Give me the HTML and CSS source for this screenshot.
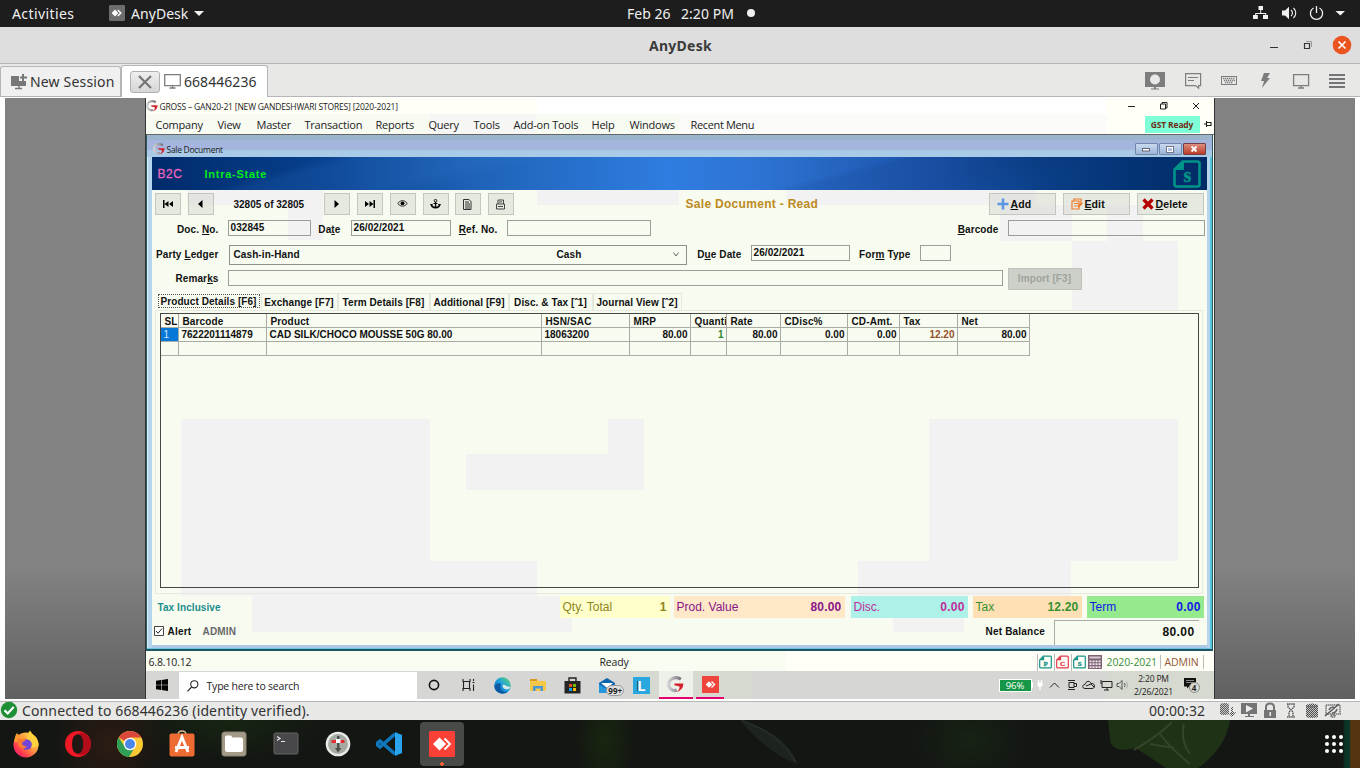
FILE: index.html
```html
<!DOCTYPE html>
<html lang="en">
<head>
<meta charset="utf-8">
<title>AnyDesk</title>
<link rel="stylesheet" href="styles.css">
</head>
<body>
<svg class="defs" width="0" height="0">
  <defs>
    <linearGradient id="gray" x1="0" y1="0" x2="1" y2="0"><stop offset="0" stop-color="#d0d0d4"/><stop offset="1" stop-color="#75707a"/></linearGradient>
    <linearGradient id="ff" x1="1" y1="0" x2="0" y2="1"><stop offset="0" stop-color="#fff44f"/><stop offset=".45" stop-color="#ff9640"/><stop offset=".75" stop-color="#ff3550"/><stop offset="1" stop-color="#e31587"/></linearGradient>
    <linearGradient id="edge" x1="0" y1="1" x2="1" y2="0"><stop offset="0" stop-color="#0c59a4"/><stop offset=".5" stop-color="#1b9de2"/><stop offset="1" stop-color="#5fdd6c"/></linearGradient>
    <pattern id="dither" width="2" height="2" patternUnits="userSpaceOnUse"><path d="M0 0h1v1H0zM1 1h1v1H1z" fill="#4e4e4e"/></pattern>
    <symbol id="gross" viewBox="0 0 16 16">
      <path d="M13 3C9 .2 1.600 1.500 1.600 8c0 4.500 4.400 6.600 7.600 5.200" fill="none" stroke="url(#gray)" stroke-width="3"/>
      <path d="M7 7h8.300c.4 4-2.900 7.400-6.500 7.800 2.400-1.200 3.200-3 3-5L7 8.800z" fill="#d3202c"/>
    </symbol>
    <symbol id="doc" viewBox="0 0 28 28">
      <path d="M9.500 1.500h15a2 2 0 0 1 2 2v21a2 2 0 0 1-2 2h-21a2 2 0 0 1-2-2v-15z" fill="none" stroke="currentColor" stroke-width="2.600"/>
      <path d="M11 1v9H1z" fill="currentColor"/>
    </symbol>
    <symbol id="monitor" viewBox="0 0 17 15"><path d="M.7.700h15.600v11H.7zM8.500 12v2M5.500 14h6" fill="none" stroke="#7d7d7d" stroke-width="1.300"/></symbol>
  </defs>
</svg>

<header class="topbar">
  <span class="activities">Activities</span>
  <svg class="ad-icon" width="16" height="16" viewBox="0 0 16 16"><rect width="16" height="16" rx="1" fill="#6d6d6d"/><path d="M6 4.500L9.300 8 6 11.500 2.600 8z" fill="#fff"/><path d="M8.800 5L11.800 8l-3 3" fill="none" stroke="#fff" stroke-width="1.400"/></svg>
  <span class="appname">AnyDesk</span>
  <i class="caret"></i>
  <span class="clock">Feb 26</span><span class="clock2">2:20 PM</span><i class="dot"></i>
  <svg class="sys" width="94" height="16" viewBox="0 0 94 16" fill="#f2f2f2">
    <path d="M5.500 1h4.500v4H5.500zM0 10h4.800v4H0zM10 10h5v4h-5zM7.200 5h1v3h5v2h-1V9h-9v1h-1V8h5z"/>
    <path d="M29 5.500h3l4-3.800v12.600l-4-3.800h-3z"/><path d="M38 5c1.800 1.800 1.800 4.200 0 6M40.500 3c3 3 3 7 0 10" fill="none" stroke="#f2f2f2" stroke-width="1.100"/>
    <path d="M60.500 3a6.100 6.100 0 1 0 6 0M63.500 1v7" fill="none" stroke="#f2f2f2" stroke-width="1.300"/>
    <path d="M82.500 6h9.500l-4.700 4.500z"/>
  </svg>
</header>

<div class="titlebar">
  <strong>AnyDesk</strong>
  <svg width="88" height="20" viewBox="0 0 88 20"><path d="M2 12.500h8" stroke="#333"/><path d="M36.500 8.500h5v5h-5z" fill="none" stroke="#333" stroke-width="1.200"/><path d="M38 6.500h5.500V12" fill="none" stroke="#999"/><circle cx="74" cy="10" r="9.300" fill="#e95420"/><path d="M70.500 6.500l7 7m0-7l-7 7" stroke="#fff" stroke-width="1.700"/></svg>
</div>

<nav class="tabs">
  <div class="tab new">
    <svg width="16" height="16" viewBox="0 0 16 16"><path d="M0 2h8v5h5v5H0z" fill="#777"/><path d="M12 0v7M9 3.500h7" stroke="#777" stroke-width="2"/><path d="M8 10v5M4 14.500h7" stroke="#777" stroke-width="1.400"/><path d="M8 7h7v5H8z" fill="#777"/></svg>
    <span>New Session</span>
  </div>
  <div class="tab active">
    <b class="close"><svg width="14" height="14" viewBox="0 0 14 14"><path d="M1 1l12 12M13 1L1 13" stroke="#757575" stroke-width="2.200"/></svg></b>
    <svg width="17" height="15"><use href="#monitor"/></svg>
    <span>668446236</span>
  </div>
  <svg class="tools" width="202" height="20" viewBox="0 0 202 20">
    <path d="M0 1h20v15H0zM9 16h2v2H9zM6 17.500h8v1H6z" fill="#7d7d7d"/><circle cx="10" cy="8.500" r="5" fill="#e8e8e7"/>
    <path d="M40.600 2.600h15v12h-2v2.500l-3-2.500h-10zM43 6.500h10M43 9.500h6" fill="none" stroke="#7d7d7d" stroke-width="1.200"/>
    <rect x="76.500" y="5.500" width="15" height="8" fill="none" stroke="#7d7d7d"/><path d="M78 7.500h12M79 9.500h11M80 11.500h8" stroke="#7d7d7d" stroke-width="1.400" stroke-dasharray="1.300 .7"/>
    <path d="M119 2h6l-3 5h3l-8 10 2-7h-3z" fill="#7d7d7d"/>
    <path d="M148.600 3.600h15v11h-15zM156 15v2M153 17h6" fill="none" stroke="#7d7d7d" stroke-width="1.300"/>
    <path d="M184 3h16v2h-16zM184 7h16v2h-16zM184 11h16v2h-16zM184 15h16v2h-16z" fill="#757575"/>
  </svg>
</nav>

<main class="session">
<section class="remote">
  <div class="gtitle">
    <svg width="12" height="12"><use href="#gross"/></svg>
    <span>GROSS – GAN20-21 [NEW GANDESHWARI STORES] [2020-2021]</span>
    <svg class="gwin" width="74" height="12" viewBox="0 0 74 12" fill="none" stroke="#222"><path d="M1 6.500h7M33.500 4h5v5h-5zM35 4V2.500h5V8h-1.500M66 3l6 6M72 3l-6 6"/></svg>
  </div>
  <div class="menu">
    <span>Company</span><span>View</span><span>Master</span><span>Transaction</span><span>Reports</span><span>Query</span><span>Tools</span><span>Add-on Tools</span><span>Help</span><span>Windows</span><span>Recent Menu</span>
    <b class="gst">GST Ready</b>
    <svg width="8" height="8" viewBox="0 0 8 8"><path d="M0 4h3M2.500 1v6M3 2.500h4v3H3M7 2v4" stroke="#222" fill="none" stroke-width="1.100"/></svg>
  </div>

  <div class="mdi">
    <div class="mtitle">
      <svg width="12" height="12"><use href="#gross"/></svg><span>Sale Document</span>
      <div class="mbtns"><i><svg width="8" height="6"><rect x=".5" y="2.500" width="7" height="2.500" fill="#fff" stroke="#667"/></svg></i><i><svg width="8" height="7"><rect x="1" y="1" width="6" height="5" fill="none" stroke="#fff" stroke-width="2"/><rect x=".5" y=".5" width="7" height="6" fill="none" stroke="#778"/></svg></i><i class="red"><svg width="8" height="6"><path d="M1.500.500l5 5m0-5l-5 5" stroke="#fff" stroke-width="2"/></svg></i></div>
    </div>
    <div class="banner">
      <span class="b2c">B2C</span><span class="intra">Intra-State</span>
      <b class="bigdoc"><svg width="28" height="28"><use href="#doc"/></svg><em>s</em></b>
    </div>

    <div class="form">
      <div class="row toolbar">
        <button><svg width="10" height="8"><path d="M0 0h1.500v8H0zM5.500 1v6L1.500 4zM10 1v6L6 4z"/></svg></button>
        <button><svg width="5" height="8"><path d="M4.500 0v8L0 4z"/></svg></button>
        <span class="count">32805 of 32805</span>
        <button><svg width="5" height="8"><path d="M.5 0v8L5 4z"/></svg></button>
        <button><svg width="10" height="8"><path d="M8.500 0H10v8H8.500zM0 1v6l4-3zM4.500 1v6l4-3z"/></svg></button>
        <button><svg width="11" height="11" viewBox="0 0 11 11"><path d="M.7 4.500Q5.500-1.500 10.300 4.500 5.500 10 .7 4.500z" fill="none" stroke="#333"/><circle cx="5.500" cy="4.300" r="1.900"/></svg></button>
        <button><svg width="11" height="10" viewBox="0 0 11 10"><circle cx="5.500" cy="1.700" r="1.300" fill="none" stroke="#111"/><path d="M4.900 3h1.300v5H4.900zM3.500 4h4v1h-4zM0 5h3L2.300 6.200q1.200 1.500 3.200 1.500t3.200-1.500L8 5h3L9.500 8q-4 3-8 0z"/></svg></button>
        <button><svg width="9" height="11" viewBox="0 0 9 11"><path d="M.5.500h5.500l2 2v8H.5zM2 3h4M2 5h5M2 7h5M2 9h5" fill="none" stroke="#333"/></svg></button>
        <button><svg width="9" height="11" viewBox="0 0 9 11"><path d="M2 5V1h5.500v4M.5 5h8v5h-8zM2 7.500h5M3 3h3" fill="none" stroke="#444"/></svg></button>
        <span class="read">Sale Document - Read</span>
        <button class="wide"><svg width="12" height="12"><path d="M6 .5v11M.5 6h11" stroke="#5b97e3" stroke-width="2.600"/></svg><span><u>A</u>dd</span></button>
        <button class="wide"><svg width="12" height="12" viewBox="0 0 12 12"><path d="M1 3h7v8H1zM3 3V1h7v4M3 5.500h4M3 8h3" fill="none" stroke="#ef7a28" stroke-width="1.200"/><path d="M6 8l5-4 .8 1.500L8 9.500z" fill="#ef7a28"/></svg><span><u>E</u>dit</span></button>
        <button class="wide"><svg width="12" height="12"><path d="M1.500 1.500l9 9m0-9l-9 9" stroke="#b40000" stroke-width="3.200"/></svg><span><u>D</u>elete</span></button>
      </div>
      <div class="row docrow">
        <label>Doc. <u>N</u>o.</label><div class="in">032845</div><label>Da<u>t</u>e</label><div class="in">26/02/2021</div><label><u>R</u>ef. No.</label><div class="in"></div><label><u>B</u>arcode</label><div class="in"></div>
      </div>
      <div class="row party">
        <label>Party <u>L</u>edger</label><div class="combo"><span>Cash-in-Hand</span><span>Cash</span><svg width="6" height="5"><path d="M.5.500L3 4 5.500.500" fill="none" stroke="#666"/></svg></div><label>D<u>u</u>e Date</label><div class="in">26/02/2021</div><label>For<u>m</u> Type</label><div class="in"></div>
      </div>
      <div class="row remarks">
        <label>Remar<u>k</u>s</label><div class="in"></div><div class="import">Import [F3]</div>
      </div>
      <div class="ftabs"><span class="on">Product Details [F6]</span><span>Exchange [F7]</span><span>Term Details [F8]</span><span>Additional [F9]</span><span>Disc. &amp; Tax [ˆ1]</span><span>Journal View [ˆ2]</span></div>
      <div class="panel"><div class="grid">
        <div class="gr head"><span>SL</span><span>Barcode</span><span>Product</span><span>HSN/SAC</span><span>MRP</span><span>Quanti</span><span>Rate</span><span>CDisc%</span><span>CD-Amt.</span><span>Tax</span><span>Net</span></div>
        <div class="gr"><span class="sel">1</span><span>7622201114879</span><span>CAD SILK/CHOCO MOUSSE 50G 80.00</span><span>18063200</span><span class="r">80.00</span><span class="r green">1</span><span class="r">80.00</span><span class="r">0.00</span><span class="r">0.00</span><span class="r brown">12.20</span><span class="r">80.00</span></div>
        <div class="gr"><span></span><span></span><span></span><span></span><span></span><span></span><span></span><span></span><span></span><span></span><span></span></div>
      </div></div>
      <div class="totals">
        <b class="incl">Tax Inclusive</b>
        <div class="t qty"><span>Qty. Total</span><b>1</b></div>
        <div class="t prod"><span>Prod. Value</span><b>80.00</b></div>
        <div class="t disc"><span>Disc.</span><b>0.00</b></div>
        <div class="t tax"><span>Tax</span><b>12.20</b></div>
        <div class="t term"><span>Term</span><b>0.00</b></div>
      </div>
      <div class="net">
        <svg width="10" height="10"><path d="M.5.500h9v9h-9z" fill="#fff" stroke="#444"/><path d="M2 5l2 2.200L8 2.500" fill="none" stroke="#222"/></svg>
        <span>Alert</span><span class="admin">ADMIN</span><span class="nb">Net Balance</span><div class="bal">80.00</div>
      </div>
    </div>
  </div>

  <div class="gstatus">
    <span>6.8.10.12</span><span class="ready">Ready</span>
    <i class="mini teal"><svg width="13" height="14"><use href="#doc"/></svg><em>P</em></i><i class="mini redc"><svg width="13" height="14"><use href="#doc"/></svg><em>C</em></i><i class="mini teal"><svg width="13" height="14"><use href="#doc"/></svg><em>S</em></i>
    <svg class="calc" width="14" height="14"><rect width="14" height="14" fill="#806475"/><path d="M1.500 1.500h11v2h-11z" fill="#d8cdd3"/><path d="M1.500 6.300h11M1.500 9.200h11M1.500 12.100h11" stroke="#f0e8ec" stroke-width="1.800" stroke-dasharray="2 1"/></svg>
    <span class="fy">2020-2021</span><span class="adm">ADMIN</span>
  </div>

  <div class="wtask">
    <div class="start"><svg width="12" height="12" viewBox="0 0 12 12"><path d="M0 1.700l5-.7v4.700H0zM5.600.900L12 0v5.700H5.600zM0 6.300h5V11l-5-.7zM5.600 6.300H12V12l-6.400-.9z"/></svg></div>
    <div class="search"><svg width="12" height="12" viewBox="0 0 12 12"><circle cx="7.300" cy="4.300" r="3.600" fill="none" stroke="#222" stroke-width="1.100"/><path d="M4.600 7L.5 11.300" stroke="#222" stroke-width="1.100"/></svg><span>Type here to search</span></div>
    <div class="apps">
      <i><svg width="12" height="12"><circle cx="6" cy="6" r="4.600" fill="none" stroke="#111" stroke-width="1.600"/></svg></i>
      <i><svg width="13" height="12" viewBox="0 0 13 12"><path d="M1 0v2.500h7V0M1 12V9.500h7V12M1.500 3v6M7.500 3v6M11.500 0v2M11.500 5.500V12M10.500 3.500h2" fill="none" stroke="#222" stroke-width="1.100"/></svg></i>
      <i><svg width="17" height="17" viewBox="0 0 17 17"><circle cx="8.500" cy="8.500" r="8.300" fill="url(#edge)"/><path d="M7 8c-2 4 2 8 7 6.500-4 4-13 2-13.500-5C2 6 7 5 7 8z" fill="#0c59a4"/><path d="M8.500 8c3-1 5 3 8 1.500-.5 2-2 3-4 2.800-3 0-4-2-4-4.300z" fill="#d9e6df"/></svg></i>
      <i><svg width="16" height="14"><path d="M0 1h7l1.500 2H16v10H0z" fill="#f6c84a"/><path d="M0 1h7v2H0z" fill="#d79a22"/><path d="M3 13V8h10v5h-2.500v-2.500h-5V13z" fill="#4a98d6"/></svg></i>
      <i><svg width="17" height="17"><path d="M5 4V1h7v3" fill="none" stroke="#222" stroke-width="1.400"/><path d="M.5 4h16v12.500H.5z" fill="#252525"/><path d="M5 7h3v3H5z" fill="#f25022"/><path d="M9 7h3v3H9z" fill="#7fba00"/><path d="M5 11h3v3H5z" fill="#00a4ef"/><path d="M9 11h3v3H9z" fill="#ffb900"/></svg></i>
      <i class="mail"><svg width="18" height="17"><path d="M1 6l8-5 8 5v10H1z" fill="#0e63ac"/><path d="M3 6h12l-6 5z" fill="#fff"/><path d="M1 7l8 5 8-5v9H1z" fill="#2596dc"/></svg><em>99+</em></i>
      <i><b class="lbox">L</b></i>
      <i class="gactive"><svg width="17" height="17"><use href="#gross"/></svg></i>
      <i class="anyd"><svg width="17" height="17"><rect width="17" height="17" fill="#ef443b"/><path d="M7 5.200L10.300 8.500 7 11.800 3.700 8.500z" fill="#fff"/><path d="M9.500 5.500l3 3-3 3" fill="none" stroke="#fff" stroke-width="1.400"/></svg></i>
    </div>
    <div class="tray">
      <span class="bat">96%</span>
      <svg width="98" height="14" viewBox="0 0 98 14" fill="none" stroke="#222"><path d="M0 4.500v5" stroke="#fff" stroke-width="2"/><path d="M6.500 2v3M9.500 2v3M8 8v4" stroke="#fff" stroke-width="1.300"/><path d="M5.500 4.500h5v3l-1.500 1.500h-2L5.500 7.500z" fill="#fff" stroke="none"/><path d="M18 9.500l4.500-4.500L27 9.500"/><path d="M37 4.500h5v5h-5zM42 5.500h2.500v3H42M36 2.500h7M36 11.500h7"/><path d="M53 10.500c-3 0-3-4 0-4 1-4 5-4 6-1 4-1 5 5 1 5zM54 8l5-2 3 3" /><path d="M70 3.500h10v6H70zM69 2v4M75 10v2M72 12h5"/><path d="M85 5.500h2l3-3v9l-3-3h-2zM92 5c1.500 1.500 1.500 3 0 4" stroke="#555"/><path d="M94 3.500c2 2 2 5 0 7" stroke="#aaa"/></svg>
      <div class="wtime"><span>2:20 PM</span><span>2/26/2021</span></div>
      <div class="note"><svg width="12" height="12"><path d="M0 1h12v8.500H5L3 11.500V9.500H0z" fill="#111"/><path d="M2 3.500h8M2 5.500h8" stroke="#bbb" stroke-width=".7"/></svg><em>4</em></div>
    </div>
  </div>
</section>
</main>

<footer class="status">
  <svg width="18" height="18"><circle cx="9" cy="9" r="8.200" fill="#1f8f35"/><path d="M4.500 9.200l3.200 3.300 6-6.500" fill="none" stroke="#fff" stroke-width="2.200"/></svg>
  <span>Connected to 668446236 (identity verified).</span>
  <span class="elapsed">00:00:32</span>
  <svg class="sicons" width="124" height="17" viewBox="0 0 124 17">
    <path d="M1 2q5-2 9 0v10q-5 2-9 0zM12 5h2v5h3l-4 5-4-4h3z" fill="url(#dither)"/>
    <path d="M1 2q5-2 9 0v10q-5 2-9 0z" fill="#888" opacity=".35"/>
    <path d="M22 1h16v11H22zM29 12h2v2h4v1h-9v-1h3z" fill="#747474"/><path d="M27 3l7 3.500-7 4z" fill="#eee"/>
    <path d="M45 8h12v8H45z" fill="#747474"/><path d="M47 8V5q0-3.500 4-3.500T55 5v3" fill="none" stroke="#747474" stroke-width="2"/><path d="M50.500 10h1.500v4h-1.500z" fill="#eee"/>
    <path d="M68 2h8M68 15h8M69 2v3l5 5v5M75 2v3l-5 5v5" fill="none" stroke="#555" stroke-width="1.300" stroke-dasharray="1.500 .6"/>
    <path d="M87 3q6-3 12 0v12q-6 2-12 0z" fill="#888" opacity=".35"/><path d="M87 3q6-3 12 0v12q-6 2-12 0z" fill="url(#dither)"/><path d="M87 4q6 2 12 0" stroke="#666" fill="none"/>
    <path d="M107 3h14v9h-14zM112 13h4v2h-4z" fill="none" stroke="#777" stroke-width="1.500" stroke-dasharray="1.500 .5"/><path d="M106 14L120 2" stroke="#555" stroke-width="1.500"/><path d="M110 8q1-3 5-3M113 11q4 0 5-4" fill="none" stroke="#666" stroke-width="1.600"/>
  </svg>
</footer>

<div class="dock">
  <i><svg width="28" height="28" viewBox="0 0 28 28"><circle cx="14" cy="15" r="12.500" fill="url(#ff)"/><path d="M14 15Q15 3 18 .500q2 4 6 6.500 3 5 2.500 9L20 18z" fill="#ffcf3c"/><path d="M2 12Q3 5 5 3l3 4q4-1 6 1l-3 4z" fill="#ff9a30"/><circle cx="14.500" cy="14.500" r="5.300" fill="#7446d8"/><path d="M5 9q5-1 9 2-4 0-4 3 2 3 5 2-3 5-8 1z" fill="#ff7a2d"/></svg></i>
  <i><svg width="28" height="28" viewBox="0 0 28 28"><path d="M14 1a13 13 0 1 0 0 26 13 13 0 1 0 0-26zM14 4q5.500 1 5.500 10T14 24Q8 23 8 14T14 4z" fill="#ef1826" fill-rule="evenodd"/><path d="M14 4q3-2 6-1 7 4 7 11t-7 11q-3 1-6-1 5.500-1 5.500-10T14 4z" fill="#b30d1b"/></svg></i>
  <i><svg width="28" height="28" viewBox="0 0 28 28"><circle cx="14" cy="14" r="13" fill="#fbc934"/><path d="M14 14L2.700 7.500A13 13 0 0 1 25.300 7.500H14z" fill="#d9483b"/><path d="M2.700 7.500A13 13 0 0 0 13 27l6-10-5 2-5-2z" fill="#2f9e56"/><circle cx="14" cy="14" r="6.300" fill="#fff"/><circle cx="14" cy="14" r="5" fill="#4a86ea"/></svg></i>
  <i><svg width="28" height="28" viewBox="0 0 28 28"><path d="M10 5q0-4 4-4t4 4" fill="none" stroke="#d8b896" stroke-width="1.500"/><rect x="1.500" y="3.500" width="25" height="23" rx="2" fill="#ee6b33"/><path d="M8 22L14 7l6 15M7 17.500h14" fill="none" stroke="#fff" stroke-width="2.800"/></svg></i>
  <i><svg width="28" height="28" viewBox="0 0 28 28"><rect x="2" y="2" width="24" height="24" rx="2.500" fill="#a39a88" stroke="#8b8373"/><path d="M5 7q0-1.500 1.500-1.500H11l1.500 2H21q2 0 2 2V20q0 2-2 2H7q-2 0-2-2z" fill="#fff"/></svg></i>
  <i><svg width="28" height="28" viewBox="0 0 28 28"><rect x="2" y="3" width="24" height="21" rx="1.500" fill="#48474a" stroke="#656565"/><path d="M5 6.500l3 2-3 2M9 11.500h4" fill="none" stroke="#e8e8e8" stroke-width="1.200"/></svg></i>
  <i><svg width="28" height="28" viewBox="0 0 28 28"><circle cx="14" cy="14" r="12.300" fill="#e9ebe9"/><circle cx="14" cy="14" r="10" fill="#a4aaa2"/><path d="M13 6h2.500v12h2L14 22.500 11 18h2z" fill="#4d504c"/><path d="M7.500 10h13v3h-13z" fill="#e52d32"/><path d="M12 9h4.500v4H12z" fill="#fff"/></svg></i>
  <i><svg width="28" height="28" viewBox="0 0 28 28"><path d="M19 4L4 17l-2.500-2v-2L4 11l15 13" fill="none" stroke="#1177bd" stroke-width="3.600"/><path d="M19 2l7 3v18l-7 3z" fill="#2aa3ee"/></svg></i>
  <i class="cur"><svg width="28" height="28" viewBox="0 0 28 28"><rect x="1" y="1" width="26" height="26" rx="1.500" fill="#fb4038"/><path d="M11.500 7.500L18 14l-6.500 6.500L5 14z" fill="#fff"/><path d="M16.500 8.500L22 14l-5.500 5.500" fill="none" stroke="#fff" stroke-width="2"/></svg></i>
  <svg class="leaves" width="861" height="48" viewBox="464 0 861 48" fill="none">
    <path d="M740 0q45 12 58 44-30-10-58-44z" fill="#1d241d"/><path d="M742 0q38 14 54 42" stroke="#2c352d"/>
    <path d="M1108 0h122q-4 28-32 48h-32q-18-12-30-20-24 6-26-8z" fill="#1f3216"/>
    <path d="M1134 30q24-14 38-28M1160 14q10 14 30 30M1150 24l24 4M1184 4q-4 16 6 30" stroke="#35452c" stroke-width="2"/>
  </svg>
  <svg width="18" height="18" fill="#fff"><circle cx="2" cy="2" r="2"/><circle cx="9" cy="2" r="2"/><circle cx="16" cy="2" r="2"/><circle cx="2" cy="9" r="2"/><circle cx="9" cy="9" r="2"/><circle cx="16" cy="9" r="2"/><circle cx="2" cy="16" r="2"/><circle cx="9" cy="16" r="2"/><circle cx="16" cy="16" r="2"/></svg>
</div>
</body>
</html>
```
FILE: styles.css
```css
* { box-sizing: border-box; }
html, body { margin: 0; height: 768px; overflow: hidden; }
body { width: 1360px; display: flex; flex-direction: column; font-family: "Noto Sans", "Open Sans", sans-serif; font-size: 14px; color: #333; white-space: nowrap; background: #fff; }
i, em { font-style: normal; }
svg { display: block; flex: none; }
.defs { position: absolute; }

/* desktop top bar */
.topbar { height: 27px; background: #1d1d1d; color: #f0f0f0; display: flex; align-items: center; padding-left: 12px; flex: none; }
.activities { width: 98px; letter-spacing: .4px; }
.ad-icon { margin-right: 6px; margin-left: -1px; margin-top: -1px; }
.appname { width: 63px; letter-spacing: .05px; }
.caret { border: 5px solid transparent; border-top-color: #f0f0f0; border-bottom: 0; }
.clock { margin-left: 423px; width: 54px; }
.clock2 { width: 66px; letter-spacing: .05px; }
.dot { width: 8px; height: 8px; border-radius: 50%; background: #f0f0f0; margin-top: -1px; }
.sys { margin-left: 498px; margin-top: -1px; }

.titlebar { height: 37px; background: #dedede; border-bottom: 1px solid #b6b6b6; display: grid; grid-template-columns: 1268px 88px; align-items: center; flex: none; }
.titlebar strong { padding-left: 649px; color: #3b3b3b; letter-spacing: .25px; font-size: 14px; }

.tabs { height: 33px; background: #e8e8e7; border-bottom: 1px solid #b6b6b6; display: flex; align-items: flex-end; flex: none; }
.tab { display: flex; align-items: center; border: 1px solid #b6b6b6; border-bottom: 0; border-radius: 3px 3px 0 0; }
.tab.new { height: 30px; width: 121px; padding-left: 10px; gap: 3px; background: #f0f0f0; letter-spacing: .17px; }
.tab.active { height: 32px; width: 147px; padding-left: 8px; background: #fff; margin-bottom: -1px; }
.close { width: 30px; height: 22px; border: 1px solid #b0b0b0; border-radius: 3px; background: linear-gradient(#efefef, #d6d6d6); display: flex; align-items: center; justify-content: center; margin-right: 4px; }
.tab.active span { margin-left: 3px; letter-spacing: .05px; }
.tab span { margin-top: -1px; }
.tools { margin-left: 877px; align-self: center; margin-top: 2px; }

/* remote session viewport */
.session { height: 605px; flex: none; display: flex; justify-content: center; padding: 1px 5px 2px; margin: 0; background: linear-gradient(#828282 0 470px, #606060) content-box, #fff; border-bottom: 1px solid #b6b6b6; }
.remote { width: 1070px; margin-right: 1px; height: 601px; border-left: 1px solid #333; border-right: 1px solid #333; background: #f7fbf0; display: flex; flex-direction: column; font-family: "Open Sans", sans-serif; color: #222; }
.gtitle { height: 16px; background: linear-gradient(90deg, #fffff8 391px, #fff 391px 960px, #fffff8 960px); display: flex; align-items: center; padding-left: 0; font-size: 8.500px; flex: none; }
.gtitle span { margin-left: 2px; width: 967px; letter-spacing: -.18px; }
.menu { height: 21px; border-bottom: 1px solid #666; background: linear-gradient(90deg, #f7fbf2 283px, #f6f6f5 283px 390px, #f7fbf2 390px 533px, #fbfbfa 533px 961px, #fffff8 961px); display: grid; grid-template-columns: 62px 39px 48px 71px 53px 45px 40px 78px 38px 61px 454px 59px 8px; align-items: center; padding-left: 10px; font-size: 11px; flex: none; }
.menu span { letter-spacing: -.22px; }
.menu span:nth-child(11) { letter-spacing: -.35px; }
.gst { height: 17px; width: 55px; background: #7fffd8; color: #6d2c18; font-size: 8.500px; display: flex; align-items: center; justify-content: center; letter-spacing: -.15px; }

.mdi { height: 516px; flex: none; border: 1px solid #2c5a60; border-top: 0; border-bottom: 2px solid #1f5563; background: linear-gradient(90deg, #d6eef6 1px, #b4d5ec 1px 5px, transparent 5px calc(100% - 5px), #b4d5ec calc(100% - 5px) calc(100% - 2px), #58c4dc calc(100% - 2px)), #a9c9e6; padding: 0 5px 4px 5px; margin: 0 1px 0 0; box-shadow: inset 0 -1px #69c6df; }
.mtitle { height: 22px; margin: 0 -5px; padding: 6px 6px 0 6px; display: flex; align-items: center; font-size: 8.500px; background: linear-gradient(#9bb5cc 5px, #a4b6de 5px 14px, #aacbe8 16px); letter-spacing: -.28px; }
.mtitle span { margin-left: 2px; width: 971px; }
.mbtns { display: flex; gap: 1px; }
.mbtns i { width: 23px; height: 12px; border: 1px solid #6e87ab; border-radius: 1px; background: linear-gradient(#c9d8ef, #9db5d9); display: flex; align-items: center; justify-content: center; }
.mbtns .red { background: linear-gradient(#dd8c7e, #bb3d27); border-color: #743e45; }
.banner { height: 33px; background: linear-gradient(165deg, transparent 15%, rgba(70,140,230,.12) 18% 29%, transparent 34% 63%, rgba(10,40,100,.12) 65% 75%, transparent 82%), linear-gradient(90deg, #002b6b, #07408d 16%, #1f63b8 31%, #2f7de0 49%, #2e74d4 57%, #1c55ad 73%, #0b3f88 84%, #002b66); display: grid; grid-template-columns: 47px 968px 30px; padding-left: 6px; align-items: center; font: 12px "Liberation Sans", sans-serif; }
.b2c { color: #e765bd; letter-spacing: .5px; -webkit-text-stroke: .3px; }
.intra { color: #00ec1c; font-weight: bold; font-size: 11px; letter-spacing: .75px; }
.bigdoc { color: #009488; width: 28px; height: 28px; display: grid; }
.bigdoc svg, .bigdoc em { grid-area: 1/1; }
.bigdoc em { font: bold 20px/20px "Liberation Serif", serif; text-align: center; padding: 5px 0 0 2px; -webkit-text-stroke: .4px; }

/* form */
.form { height: 455px; width: 1055px; font: bold 10px "Liberation Sans", sans-serif; color: #111;
  --t: linear-gradient(#f3f2f3, #f3f2f3);
  background:
    var(--t) 29px 229px / 249px 177px, var(--t) 278px 371px / 107px 35px, var(--t) 100px 406px / 320px 36px,
    var(--t) 456px 229px / 36px 35px, var(--t) 314px 264px / 178px 36px, var(--t) 777px 229px / 249px 142px,
    var(--t) 706px 371px / 213px 35px, var(--t) 741px 406px / 71px 36px, var(--t) 920px 51px / 106px 69px,
    var(--t) 136px 0 / 35px 50px, var(--t) 35px 0 / 101px 15px, var(--t) 385px 0 / 142px 15px, var(--t) 634px 0 / 250px 15px,
    var(--t) 848px 15px / 72px 36px, var(--t) 955px 15px / 36px 36px, #f7fbf0;
  background-repeat: no-repeat; }
.row { display: grid; align-items: center; }
.toolbar { height: 28px; padding: 3px 0 3px 3px; grid-template-columns: 33px 33px 103px 33px 33px 33px 32px 33px 45px 456px 74px 74px 67px; }
button { width: 26px; height: 22px; padding: 0; border: 1px solid #c4c7c0; background: rgba(215,218,209,.55); font: inherit; font-size: 10.500px; color: #111; display: flex; align-items: center; justify-content: center; }
button.wide { width: 67px; justify-content: flex-start; padding-left: 7px; gap: 2px; letter-spacing: .1px; }
button.wide:last-child { padding-left: 4px; }
.count { padding-left: 13px; }
.read { color: #bd8b22; font-size: 12px; letter-spacing: .3px; padding-left: 153px; }
label { text-align: right; padding-right: 9px; letter-spacing: .12px; }
.in { height: 16px; border: 1px solid #9b9d97; padding-left: 2px; line-height: 13px; letter-spacing: .08px; }
.docrow { height: 20px; padding-top: 1px; grid-template-columns: 76px 83px 40px 100px 56px 144px 357px 197px; }
.docrow label { padding-top: 1px; }
.docrow label:nth-child(3) { padding-right: 10px; }
.docrow .in { margin-top: -2px; }
.party { height: 30px; padding-top: 2px; grid-template-columns: 76px 459px 64px 99px 70px 31px; }
.party .combo { height: 20px; margin-left: 1px; border: 1px solid #8f918c; display: grid; grid-template-columns: 323px 116px 8px; align-items: center; padding-left: 4px; margin-top: 1px; letter-spacing: .1px; }
.party label { padding-right: 9px; }
.party .in { margin-top: -3px; }
.remarks { height: 22px; grid-template-columns: 76px 781px 73px; }
.remarks label { margin-top: -1px; }
.remarks .in { margin-right: 6px; margin-top: -3px; }
.import { height: 22px; margin-top: -1px; margin-left: -1px; border: 1px solid #bfc2bb; background: #cdd0c9; color: #a0a39e; display: flex; align-items: center; justify-content: center; letter-spacing: .1px; }
.ftabs { height: 20px; display: grid; grid-template-columns: 103px 77px 92px 79px 84px 89px; padding: 3px 0 0 6px; }
.ftabs span { height: 17px; border: 1px solid #e4e8dd; border-bottom: 0; line-height: 18px; text-align: center; letter-spacing: .08px; }
.ftabs .on { border: 1px dotted #555; height: 14px; margin: 1px 1px 0 0; line-height: 13px; }
.panel { height: 284px; margin: 0 4px 0 3px; border: 1px solid #e6e9e0; padding: 2px 3px 3px 4px; }
.grid { height: 275px; border: 1px solid #454745; }
.gr { display: grid; grid-template-columns: 18px 88px 275px 88px 61px 36px 54px 67px 52px 58px 72px; height: 14px; }
.gr span { border-right: 1px solid #a9aca5; border-bottom: 1px solid #a9aca5; padding: 0 2px 0 3px; line-height: 13px; overflow: hidden; }
.gr.head span { padding: 0 0 0 4px; line-height: 15px; letter-spacing: .15px; }
.gr .r { text-align: right; }
.gr .sel { background: #0878d8; color: #cfe6ff; font-weight: normal; }
.gr .green { color: #2d8a30; } .gr .brown { color: #94502c; }
.totals { height: 26px; display: grid; grid-template-columns: 402px 110px 4px 171px 6px 117px 5px 109px 5px 117px; padding: 2px 0 2px 6px; align-items: center; }
.incl { color: #1c8d8d; letter-spacing: .08px; }
.t { height: 22px; display: flex; justify-content: space-between; align-items: center; padding: 0 3px; font-size: 12px; }
.t span { font-weight: normal; }
.t b { letter-spacing: .2px; }
.prod { grid-column: 4; } .disc { grid-column: 6; } .tax { grid-column: 8; } .term { grid-column: 10; }
.qty { background: #ffffcc; color: #8c8519; }
.prod { background: #ffe8c8; color: #891489; }
.disc { background: #adf1e9; color: #c02c9a; }
.tax { background: #ffe0b4; color: #359030; }
.term { background: #94ea8c; color: #1118e8; }
.net { height: 25px; display: grid; grid-template-columns: 14px 35px 783px 68px 145px; padding-left: 2px; align-items: center; letter-spacing: .2px; }
.net > svg, .net > span { margin-top: -3px; }
.admin { color: #686868; }
.bal { height: 25px; border: 1px solid #a9aca5; border-width: 1px 0 0 1px; font-size: 12px; text-align: right; padding: 4px 4px 0 0; letter-spacing: .4px; }

/* application status line */
.gstatus { height: 20px; display: flex; align-items: center; font-size: 10.500px; padding-left: 3px; letter-spacing: -.15px; background: linear-gradient(90deg, #f8fcf1 640px, #fffff8 640px); flex: none; padding-top: 2px; }
.gstatus > span:first-child { width: 451px; }
.ready { width: 437px; }
.mini { width: 17px; height: 17px; border-left: 1px solid #bbb; display: grid; place-items: center; }
.mini svg, .mini em { grid-area: 1/1; }
.mini em { font: bold 7px "Liberation Serif", serif; padding-top: 3px; -webkit-text-stroke: .3px; }
.teal { color: #169488; } .redc { color: #e23c4c; }
.calc { margin: 0 5px 0 0; }
.fy { color: #38903c; border-right: 1px solid #bbb; width: 54px; letter-spacing: -.1px; }
.adm { color: #955536; border-right: 1px solid #bbb; padding-left: 4px; width: 43px; letter-spacing: -.1px; }

/* remote taskbar */
.wtask { height: 28px; background: linear-gradient(90deg, #d6d6d5 485px, #d5d9cf 485px 606px, #d6d6d5 606px 960px, #d5d9cf 960px); display: flex; flex: none; }
.start { width: 33px; display: flex; align-items: center; justify-content: center; }
.search { width: 238px; margin-top: 1px; height: 27px; background: #fff; display: flex; align-items: center; padding-left: 8px; gap: 8px; font-size: 10.500px; letter-spacing: -.2px; }
.apps { display: flex; }
.apps > i { width: 34.600px; height: 28px; display: flex; align-items: center; justify-content: center; }
.mail { position: relative; }
.mail em { position: absolute; right: 0; bottom: 3px; font-size: 8px; font-weight: bold; line-height: 9px; border: 1px solid #999; border-radius: 6px; background: #ddd; padding: 0 1px; }
.lbox { width: 17px; height: 17px; background: #29a8df; color: #fff; font: bold 15px/17px "Open Sans", sans-serif; text-align: center; text-shadow: -1px 0 #135; }
.apps .gactive { background: #eef1e9; border-bottom: 2px solid #e6006e; }
.apps .anyd { border-bottom: 2px solid #e6006e; width: 28px; margin-left: 3px; }
.tray { margin-left: auto; display: flex; align-items: center; padding-right: 11px; }
.bat { width: 33px; height: 13px; background: #169647; color: #fff; border: 1px solid #fff; font-size: 9.500px; line-height: 11px; text-align: center; }
.wtime { display: flex; flex-direction: column; align-items: center; font-size: 8.500px; line-height: 13px; width: 42px; margin: 0 9px 0 3px; letter-spacing: -.15px; }
.note { position: relative; width: 19px; height: 16px; }
.note em { position: absolute; left: 5px; top: 5px; width: 11px; height: 11px; border: 1px solid #888; border-radius: 50%; background: #d5d9cf; font-size: 8px; font-weight: bold; line-height: 9px; text-align: center; }

.status { height: 18px; background: #e8e8e7; display: flex; align-items: center; flex: none; }
.status > span { margin-left: 4px; letter-spacing: .13px; margin-top: -2px; }
.status > svg:first-child { margin-top: -2px; }
.status .elapsed { margin-left: auto; letter-spacing: .05px; }
.sicons { margin: -2px 17px 0 14px; }

.dock { height: 48px; flex: none; display: flex; align-items: center; background: linear-gradient(90deg, transparent 1343px, #0a3628 1345px 1349px, #543510 1351px), radial-gradient(ellipse 60px 50px at 970px 20px, #172214, transparent), radial-gradient(ellipse 30px 60px at 605px 20px, #19260f, transparent), radial-gradient(ellipse 60px 60px at 110px 24px, #2c1b12, transparent), radial-gradient(ellipse 100px 40px at 230px 0, #172512, transparent), #131613; }
.dock i { width: 52px; height: 44px; display: flex; align-items: center; justify-content: center; }
.dock .cur { width: 44px; height: 44px; border-radius: 4px; background: radial-gradient(circle 2px at 22px 42px, #ef6030 90%, transparent), #484a48; margin-left: 4px; }
```
